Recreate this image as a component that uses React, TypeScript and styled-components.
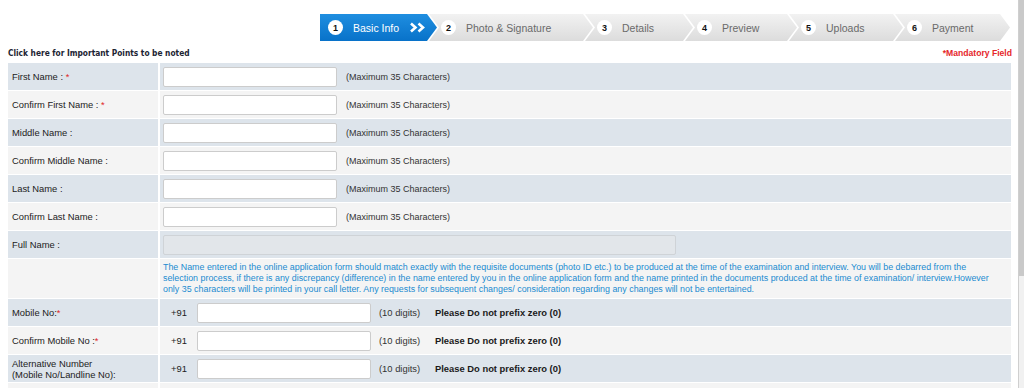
import * as React from "react";
import styled, { createGlobalStyle } from "styled-components";

const GlobalStyle = createGlobalStyle`
  html, body {
    margin: 0;
    padding: 0;
    background: #ffffff;
  }
  body {
    font-family: "Liberation Sans", Arial, sans-serif;
  }
`;

const steps = [
  { n: 1, label: "Basic Info", width: 117 },
  { n: 2, label: "Photo & Signature", width: 164 },
  { n: 3, label: "Details", width: 108 },
  { n: 4, label: "Preview", width: 112 },
  { n: 5, label: "Uploads", width: 114 },
  { n: 6, label: "Payment", width: 115 },
];

const nameFields = [
  { label: "First Name :", required: true },
  { label: "Confirm First Name :", required: true },
  { label: "Middle Name :", required: false },
  { label: "Confirm Middle Name :", required: false },
  { label: "Last Name :", required: false },
  { label: "Confirm Last Name :", required: false },
];

const BLUE_ROW = "#dde4eb";
const LIGHT_ROW = "#f4f4f4";

const PhoneRow = ({ tone, children }: { tone: string; children: React.ReactNode }) => (
  <Row>
    <LabelCell $tone={tone}>
      <LabelText>{children}</LabelText>
    </LabelCell>
    <PhoneCell $tone={tone}>
      <Prefix>+91</Prefix>
      <TextInput />
      <Digits>(10 digits)</Digits>
      <Warning>Please Do not prefix zero (0)</Warning>
    </PhoneCell>
  </Row>
);

const App = () => {
  return (
    <>
      <GlobalStyle />
      <Page>
        <Main>
          <Stepper>
            {steps.map((s, i) => (
              <Step
                key={s.n}
                $active={i === 0}
                $first={i === 0}
                style={{ width: s.width }}
              >
                <StepNumber>{s.n}</StepNumber>
                <StepLabel $active={i === 0}>{s.label}</StepLabel>
                {i === 0 && (
                  <svg width="18" height="11" viewBox="0 0 18 11">
                    <polyline
                      points="2,1.5 6.5,5.5 2,9.5"
                      fill="none"
                      stroke="#fff"
                      strokeWidth="2.6"
                    />
                    <polyline
                      points="9.5,1.5 14,5.5 9.5,9.5"
                      fill="none"
                      stroke="#fff"
                      strokeWidth="2.6"
                    />
                  </svg>
                )}
              </Step>
            ))}
          </Stepper>

          <TopLine>
            <ImportantLink>Click here for Important Points to be noted</ImportantLink>
            <Mandatory>*Mandatory Field</Mandatory>
          </TopLine>

          <Form>
            {nameFields.map((f, i) => (
              <Row key={f.label}>
                <LabelCell $tone={i % 2 === 0 ? BLUE_ROW : LIGHT_ROW}>
                  <LabelText>
                    {f.label}
                    {f.required && <Star> *</Star>}
                  </LabelText>
                </LabelCell>
                <ValueCell $tone={i % 2 === 0 ? BLUE_ROW : LIGHT_ROW}>
                  <TextInput />
                  <Hint>(Maximum 35 Characters)</Hint>
                </ValueCell>
              </Row>
            ))}

            <Row>
              <LabelCell $tone={BLUE_ROW}>
                <LabelText>Full Name :</LabelText>
              </LabelCell>
              <ValueCell $tone={BLUE_ROW}>
                <TextInput $wide disabled />
              </ValueCell>
            </Row>

            <Row $tall>
              <LabelCell $tone={LIGHT_ROW} />
              <ValueCell $tone={LIGHT_ROW}>
                <Note>
                  The Name entered in the online application form should match exactly with the requisite documents (photo ID etc.) to be produced at the time of the examination and interview. You will be debarred from the
                  <br />
                  selection process, if there is any discrepancy (difference) in the name entered by you in the online application form and the name printed in the documents produced at the time of examination/ interview.However
                  <br />
                  only 35 characters will be printed in your call letter. Any requests for subsequent changes/ consideration regarding any changes will not be entertained.
                </Note>
              </ValueCell>
            </Row>

            <PhoneRow tone={BLUE_ROW}>
              Mobile No:<Star>*</Star>
            </PhoneRow>
            <PhoneRow tone={LIGHT_ROW}>
              Confirm Mobile No :<Star>*</Star>
            </PhoneRow>
            <PhoneRow tone={BLUE_ROW}>
              Alternative Number
              <br />
              (Mobile No/Landline No):
            </PhoneRow>
            <Row>
              <LabelCell $tone={LIGHT_ROW} />
              <ValueCell $tone={LIGHT_ROW} />
            </Row>
          </Form>
        </Main>
        <ScrollTrack>
          <ScrollThumb />
        </ScrollTrack>
      </Page>
    </>
  );
};

const Page = styled.div`
  display: flex;
  width: 1024px;
  height: 388px;
  overflow: hidden;
`;

const Main = styled.div`
  flex: 1;
  min-width: 0;
  padding: 0 7px 0 8px;
`;

const ScrollTrack = styled.div`
  width: 5px;
  display: flex;
  flex-direction: column;
  background: #f1f1f1;
  border-left: 1px solid #cfcfcf;
`;

const ScrollThumb = styled.div`
  height: 276px;
  background: #c9c9c9;
`;

const Stepper = styled.div`
  display: flex;
  height: 27px;
  margin: 14px 0 0 312px;
`;

const Step = styled.div<{ $active?: boolean; $first?: boolean }>`
  height: 100%;
  box-sizing: border-box;
  display: flex;
  align-items: center;
  flex-shrink: 0;
  padding-left: ${(p) => (p.$first ? "8px" : "12px")};
  margin-left: ${(p) => (p.$first ? "0" : "-8px")};
  position: relative;
  z-index: ${(p) => (p.$active ? 2 : 1)};
  background: ${(p) =>
    p.$active
      ? "linear-gradient(#1f8ee0, #0872c9)"
      : "linear-gradient(#f2f2f2, #dcdcdc)"};
  clip-path: ${(p) =>
    p.$first
      ? "polygon(0 0, calc(100% - 10px) 0, 100% 50%, calc(100% - 10px) 100%, 0 100%)"
      : "polygon(0 0, calc(100% - 10px) 0, 100% 50%, calc(100% - 10px) 100%, 0 100%, 10px 50%)"};
  gap: 10px;
`;

const StepNumber = styled.span`
  width: 15px;
  height: 15px;
  border-radius: 50%;
  background: #ffffff;
  color: #111;
  font-size: 9px;
  font-weight: bold;
  display: flex;
  align-items: center;
  justify-content: center;
  flex-shrink: 0;
`;

const StepLabel = styled.span<{ $active?: boolean }>`
  font-size: 10.5px;
  color: ${(p) => (p.$active ? "#ffffff" : "#6a6a6a")};
  white-space: nowrap;
`;

const TopLine = styled.div`
  display: flex;
  justify-content: space-between;
  align-items: center;
  height: 16px;
  margin-top: 4px;
`;

const ImportantLink = styled.span`
  font-family: "DejaVu Sans Condensed", "DejaVu Sans", sans-serif;
  font-size: 8.3px;
  font-weight: bold;
  color: #1c2433;
  cursor: pointer;
`;

const Mandatory = styled.span`
  font-size: 8.6px;
  font-weight: bold;
  color: #e5262b;
  margin-right: -1px;
`;

const Form = styled.div`
  display: flex;
  flex-direction: column;
  gap: 1px;
  margin-top: 2px;
  background: #ffffff;
`;

const Row = styled.div<{ $tall?: boolean }>`
  display: grid;
  grid-template-columns: 150px 1fr;
  column-gap: 2px;
  min-height: ${(p) => (p.$tall ? "39px" : "27px")};
`;

const LabelCell = styled.div<{ $tone: string }>`
  background: ${(p) => p.$tone};
  display: flex;
  align-items: center;
  padding: 0 4px;
`;

const LabelText = styled.div`
  font-size: 9.4px;
  line-height: 11px;
  color: #222;
  white-space: nowrap;
`;

const Star = styled.span`
  color: #e02424;
`;

const ValueCell = styled.div<{ $tone: string }>`
  background: ${(p) => p.$tone};
  display: flex;
  align-items: center;
  padding: 0 3px;
  gap: 9px;
`;

const PhoneCell = styled(ValueCell)`
  padding-left: 11px;
  gap: 0;
`;

const TextInput = styled.input<{ $wide?: boolean }>`
  box-sizing: border-box;
  width: ${(p) => (p.$wide ? "513px" : "174px")};
  height: 20px;
  margin: 0;
  border: 1px solid ${(p) => (p.$wide ? "#cfd3d7" : "#cccccc")};
  border-radius: 2px;
  background: ${(p) => (p.$wide ? "#e2e6ea" : "#ffffff")};
  flex-shrink: 0;
`;

const Hint = styled.span`
  font-size: 9px;
  color: #333;
  white-space: nowrap;
`;

const Note = styled.div`
  font-size: 8.9px;
  line-height: 11px;
  color: #1b8bd0;
  white-space: nowrap;
  padding: 1px 0;
`;

const Prefix = styled.span`
  font-size: 9.4px;
  color: #222;
  width: 26px;
`;

const Digits = styled.span`
  font-size: 9.4px;
  color: #333;
  margin-left: 8px;
  width: 56px;
  white-space: nowrap;
`;

const Warning = styled.span`
  font-size: 9.4px;
  font-weight: bold;
  color: #1a1a1a;
  white-space: nowrap;
`;

export default App;
